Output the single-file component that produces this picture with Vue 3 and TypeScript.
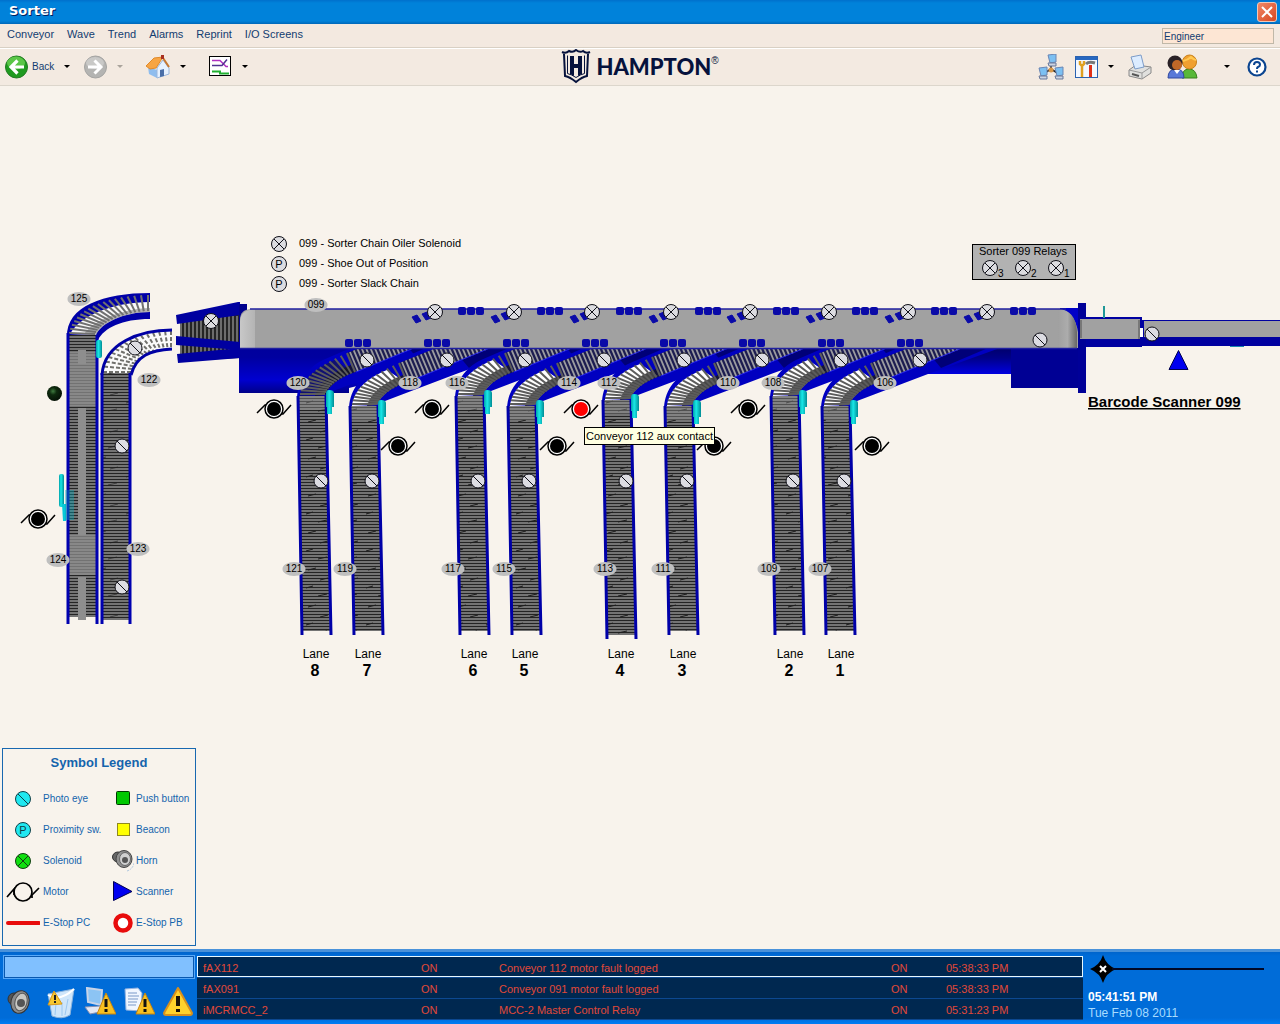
<script setup lang="ts">
import { ref } from 'vue'

type Pt = [number, number]
type Segment = { x1: number; y1: number; x2: number; y2: number }
type Mark = { x: number; y: number }

const operator = ref('Engineer')
const command = ref('')

const menus = ['Conveyor', 'Wave', 'Trend', 'Alarms', 'Reprint', 'I/O Screens']

const bezier = (p: Pt[], t: number): Pt => {
  const u = 1 - t
  const k = [u * u * u, 3 * u * u * t, 3 * u * t * t, t * t * t]
  return [0, 1].map((i) => k.reduce((s, c, n) => s + c * p[n][i], 0)) as Pt
}

const between = (a: Pt, b: Pt, t: number): Pt => [a[0] + (b[0] - a[0]) * t, a[1] + (b[1] - a[1]) * t]

const seg = (a: Pt, b: Pt): Segment => ({ x1: a[0], y1: a[1], x2: b[0], y2: b[1] })

const fan = (outer: Pt[], inner: Pt[], n: number): Segment[] =>
  Array.from({ length: n }, (_, i) => seg(bezier(outer, i / (n - 1)), bezier(inner, i / (n - 1))))

/* Rollers of a spur, relative to the top left corner of its lane */
const outerCurve: Pt[] = [[3, -2], [5, -18], [22, -31], [50, -43]]
const innerCurve: Pt[] = [[28, -2], [32, -11], [42, -18], [58, -24]]
const spurCurve = fan(outerCurve, innerCurve, 14)
const spurStraight = Array.from({ length: 27 }, (_, i) =>
  seg(between([53, -44], [151, -84], i / 26), between([61, -25], [159, -65], i / 26)),
)

const lanes = [
  { no: 8, x: 297, top: 396, end: 635, tx: 315 },
  { no: 7, x: 349, top: 406, end: 635, tx: 367 },
  { no: 6, x: 455, top: 396, end: 635, tx: 473 },
  { no: 5, x: 507, top: 406, end: 635, tx: 524 },
  { no: 4, x: 602, top: 400, end: 639, tx: 620 },
  { no: 3, x: 664, top: 406, end: 635, tx: 682 },
  { no: 2, x: 770, top: 396, end: 635, tx: 789 },
  { no: 1, x: 821, top: 406, end: 635, tx: 840 },
]

const upperFan = fan(
  [[69, 333], [74, 308], [108, 296], [148, 295]],
  [[95, 334], [100, 322], [124, 312], [148, 311]],
  18,
)
const lowerFan = fan(
  [[103, 372], [106, 344], [142, 332], [171, 331]],
  [[131, 372], [136, 356], [154, 351], [171, 348]],
  16,
)

const funnelRollers = Array.from({ length: 15 }, (_, i) => 181 + i * 4)

const shoesTop = [458, 537, 616, 695, 773, 852, 931, 1010]
const shoesBottom = [345, 424, 503, 582, 660, 739, 818, 897]
const shoesTilted = [412, 491, 570, 649, 727, 806, 885, 964]

const solenoids: Mark[] = [
  ...[435, 514, 592, 671, 750, 829, 908, 987].map((x) => ({ x, y: 312 })),
  { x: 211, y: 321 },
  { x: 279, y: 244 },
  { x: 990, y: 268 },
  { x: 1023, y: 268 },
  { x: 1056, y: 268 },
]

const photoEyes: Mark[] = [
  ...[367, 447, 525, 604, 684, 762, 841, 920].map((x) => ({ x, y: 360 })),
  ...[321, 372, 478, 529, 626, 687, 793, 844].map((x) => ({ x, y: 481 })),
  { x: 122, y: 446 },
  { x: 122, y: 587 },
  { x: 135, y: 348 },
  { x: 1040, y: 340 },
  { x: 1152, y: 334 },
]

const motors = [
  { x: 274, y: 409, fault: false },
  { x: 432, y: 409, fault: false },
  { x: 581, y: 409, fault: true },
  { x: 748, y: 409, fault: false },
  { x: 398, y: 446, fault: false },
  { x: 557, y: 446, fault: false },
  { x: 714, y: 446, fault: false },
  { x: 872, y: 446, fault: false },
  { x: 38, y: 519, fault: false },
]

const tags = [
  { id: '125', x: 79, y: 299 }, { id: '122', x: 149, y: 380 }, { id: '124', x: 58, y: 560 },
  { id: '123', x: 138, y: 549 }, { id: '099', x: 316, y: 305 }, { id: '120', x: 298, y: 383 },
  { id: '118', x: 410, y: 383 }, { id: '116', x: 457, y: 383 }, { id: '114', x: 569, y: 383 },
  { id: '112', x: 609, y: 383 }, { id: '110', x: 728, y: 383 }, { id: '108', x: 773, y: 383 },
  { id: '106', x: 885, y: 383 }, { id: '121', x: 294, y: 569 }, { id: '119', x: 345, y: 569 },
  { id: '117', x: 453, y: 569 }, { id: '115', x: 504, y: 569 }, { id: '113', x: 605, y: 569 },
  { id: '111', x: 663, y: 569 }, { id: '109', x: 769, y: 569 }, { id: '107', x: 820, y: 569 },
]

const alarms = [
  { tag: 'fAX112', state: 'ON', text: 'Conveyor 112 motor fault logged', ack: 'ON', time: '05:38:33 PM' },
  { tag: 'fAX091', state: 'ON', text: 'Conveyor 091 motor fault logged', ack: 'ON', time: '05:38:33 PM' },
  { tag: 'iMCRMCC_2', state: 'ON', text: 'MCC-2 Master Control Relay', ack: 'ON', time: '05:31:23 PM' },
]
</script>

<template>
  <div class="screen">
    <header class="titlebar">
      <h1>Sorter</h1>
      <button class="close" type="button" aria-label="Close">
        <svg width="12" height="12" viewBox="0 0 12 12"><path d="M1 1 11 11M11 1 1 11" stroke="#fff" stroke-width="2" /></svg>
      </button>
    </header>

    <nav class="menubar">
      <a v-for="m in menus" :key="m" href="#">{{ m }}</a>
      <input v-model="operator" class="operator" type="text" aria-label="Operator" />
    </nav>

    <div class="toolbar">
      <div class="tools">
        <div class="split nav">
          <button type="button" class="tool">
            <svg width="23" height="24" viewBox="0 0 23 24">
              <circle cx="11.5" cy="12" r="11" fill="#1f9a1f" stroke="#237a23" />
              <ellipse cx="11" cy="8" rx="9" ry="6.5" fill="#6fd455" opacity=".75" />
              <path d="M12.5 5.500 6 12l6.500 6.500M6.500 12H19" fill="none" stroke="#fff" stroke-width="3.200" />
            </svg>
            <span>Back</span>
          </button>
          <button type="button" class="drop" aria-label="Back history"><i /></button>
        </div>
        <div class="split nav">
          <button type="button" class="tool" aria-label="Forward">
            <svg width="23" height="24" viewBox="0 0 23 24">
              <circle cx="11.5" cy="12" r="11" fill="#b4b4b2" stroke="#a4a4a2" />
              <ellipse cx="11" cy="8" rx="9" ry="6" fill="#d2d2d0" opacity=".7" />
              <path d="M10.5 5.500 17 12l-6.500 6.500M16.500 12H4" fill="none" stroke="#fff" stroke-width="3" />
            </svg>
          </button>
          <button type="button" class="drop faint" aria-label="Forward history"><i /></button>
        </div>
        <div class="split">
          <button type="button" class="tool" aria-label="Home">
            <svg width="24" height="24" viewBox="0 0 24 24">
              <path d="M2 12 11 15V23L3 19Z" fill="#8fbdee" />
              <path d="M11 13 17 5l6 8v6l-12 4Z" fill="#e6f1ff" stroke="#9ab6dc" />
              <path d="M0 11 8 3 17 2 10 13 4 14Z" fill="#f7a544" stroke="#e08a2a" />
              <path d="M17 3 23 12" stroke="#c87830" stroke-width="2" />
              <path d="M14 15l4-1v7l-4 1Z" fill="#4a6fa8" />
              <path d="M15 0h3v4h-3z" fill="#a83020" />
            </svg>
          </button>
          <button type="button" class="drop" aria-label="Home menu"><i /></button>
        </div>
        <div class="split">
          <button type="button" class="tool" aria-label="Trend">
            <svg width="23" height="21" viewBox="0 0 23 21">
              <rect x=".5" y=".5" width="21" height="19" fill="#fff" stroke="#000" />
              <path d="M3 4.500h8l6 6h2" fill="none" stroke="#b030c0" stroke-width="1.500" />
              <path d="M3 9.500h10l5-6" fill="none" stroke="#503090" stroke-width="1.500" />
              <path d="M3 15.500h8v2h9" fill="none" stroke="#20b030" stroke-width="2" />
            </svg>
          </button>
          <button type="button" class="drop" aria-label="Trend menu"><i /></button>
        </div>
      </div>

      <div class="brand">
        <svg width="31" height="35" viewBox="0 0 31 35" aria-hidden="true">
          <path d="M1 3q4 2 7-1 4 2 7-1 4 3 7 1 3 3 7 1M3 5l1 22q5 1 11 6 6-5 11-6l1-22" fill="none" stroke="#06123c" stroke-width="2" />
          <path d="M6.500 6.500v18q4 1 8.500 4 4.500-3 8.500-4v-18" fill="none" stroke="#06123c" />
          <path d="M9 7h4v8h4V7h4v18l-4 2v-8h-4v8l-4-2Z" fill="#06123c" />
        </svg>
        <span class="name">HAMPTON</span><sup>®</sup>
      </div>

      <div class="tools right">
        <button type="button" class="tool" aria-label="Network">
          <svg width="26" height="26" viewBox="0 0 26 26">
            <path d="M13 8v8M5 20 13 15l8 5" stroke="#222" stroke-width="1.500" fill="none" />
            <circle cx="13" cy="16" r="2.500" fill="#d89848" />
            <g v-for="p in [[9, 0], [0, 13], [16, 13]]" :key="p[0]" :transform="`translate(${p[0]} ${p[1]})`">
              <path d="M1 1 9 0v8l-6 1Z" fill="#7cc0f2" stroke="#6a86b4" />
              <path d="M1 9h8v3H2Z" fill="#ccd4e2" stroke="#69789a" />
            </g>
          </svg>
        </button>
        <div class="split">
          <button type="button" class="tool" aria-label="Settings">
            <svg width="23" height="22" viewBox="0 0 23 22">
              <rect x=".5" y=".5" width="22" height="21" fill="#f4f8ff" stroke="#2a62b0" />
              <path d="M1 1h21v3H1z" fill="#2768c0" />
              <path d="M5 5v3l2 2 2-2V5M7 10v11" stroke="#e0a020" stroke-width="2.500" fill="none" />
              <path d="M11 8q3-3 9-1" stroke="#777" stroke-width="3" fill="none" />
              <path d="M15.500 9v12" stroke="#e03018" stroke-width="3" />
            </svg>
          </button>
          <button type="button" class="drop" aria-label="Settings menu"><i /></button>
        </div>
        <button type="button" class="tool print" aria-label="Print">
          <svg width="24" height="26" viewBox="0 0 24 26">
            <path d="M1 16 8 11l15 2v6l-9 6-13-3Z" fill="#e0e0de" stroke="#888" />
            <path d="M3 3 13 1l3 12-9 2Z" fill="#dcecff" stroke="#7c9cc8" />
            <path d="M1 16l13 3 9-6M14 19v5" stroke="#999" fill="none" />
            <path d="M4 20l7 2" stroke="#555" stroke-width="2" />
          </svg>
        </button>
        <div class="split users">
          <button type="button" class="tool" aria-label="Users">
            <svg width="31" height="26" viewBox="0 0 31 26">
              <path d="M15 24q0-9 7-9t8 9Z" fill="#58b838" stroke="#38801c" />
              <circle cx="22.500" cy="8" r="7" fill="#f0a030" stroke="#c88018" />
              <path d="M16 7q5-1 8-4 3 3 5 3" stroke="#ffc850" stroke-width="2" fill="none" />
              <path d="M1 24q0-9 8-9t8 9Z" fill="#5878d8" stroke="#3048a0" />
              <circle cx="8" cy="9" r="7.500" fill="#2a2226" />
              <circle cx="10" cy="11" r="5" fill="#c06828" />
              <path d="M7 16l3 4 3-4Z" fill="#fff" />
            </svg>
          </button>
          <button type="button" class="drop" aria-label="Users menu"><i /></button>
        </div>
        <button type="button" class="tool help" aria-label="Help">
          <svg width="20" height="20" viewBox="0 0 20 20">
            <circle cx="10" cy="10" r="8.500" fill="#fff" stroke="#0b4590" stroke-width="2.200" />
            <path d="M7 8q0-3 3-3t3 2.700q0 1.500-2 2.300-1 .5-1 2" fill="none" stroke="#0b4590" stroke-width="2" />
            <path d="M9 13.500h2v2H9z" fill="#0b4590" />
          </svg>
        </button>
      </div>
    </div>

    <main class="stage">
      <svg class="plant" viewBox="0 86 1280 600" role="img" aria-label="Sorter conveyor layout">
        <defs>
          <pattern id="rows" width="8" height="3" patternUnits="userSpaceOnUse">
            <rect width="8" height="3" fill="#747474" />
            <rect y="2" width="8" height="1" fill="#242424" />
          </pattern>
          <pattern id="rowsLight" width="8" height="3" patternUnits="userSpaceOnUse">
            <rect width="8" height="3" fill="#888" />
            <rect y="2" width="8" height="1" fill="#727272" />
          </pattern>
          <pattern id="wear" width="30" height="37" patternUnits="userSpaceOnUse">
            <path d="M18 4l9-2M8 15l8-2M20 25l8-2M6 33l7-2" stroke="#1c1c1c" />
          </pattern>
          <linearGradient id="base" x1="0" y1="0" x2="0" y2="1">
            <stop offset="0" stop-color="#00008c" />
            <stop offset=".6" stop-color="#0000a0" />
            <stop offset=".85" stop-color="#0000d0" />
            <stop offset="1" stop-color="#000088" />
          </linearGradient>
          <linearGradient id="apron" x1="0" y1="0" x2="0" y2="1">
            <stop offset="0" stop-color="#000068" />
            <stop offset=".4" stop-color="#000088" />
            <stop offset="1" stop-color="#0000e0" />
          </linearGradient>
          <linearGradient id="drum" x1="0" y1="0" x2="1" y2="0">
            <stop offset="0" stop-color="#c8c8c8" />
            <stop offset="1" stop-color="#b4b4b4" />
          </linearGradient>
          <linearGradient id="drumEnd" x1="0" y1="0" x2="1" y2="0">
            <stop offset="0" stop-color="#a0a0a0" />
            <stop offset=".5" stop-color="#acacac" />
            <stop offset="1" stop-color="#666" />
          </linearGradient>
          <radialGradient id="ball" cx=".4" cy=".35" r=".7">
            <stop offset="0" stop-color="#3f7a3f" />
            <stop offset=".35" stop-color="#0e2a0e" />
            <stop offset="1" stop-color="#050f05" />
          </radialGradient>
          <linearGradient id="cyan" x1="0" y1="0" x2="1" y2="0">
            <stop offset="0" stop-color="#00a0a8" />
            <stop offset=".4" stop-color="#18e8e8" />
            <stop offset="1" stop-color="#008c94" />
          </linearGradient>
          <clipPath id="belowBelt"><rect x="230" y="349" width="800" height="300" /></clipPath>
          <g id="eye">
            <circle r="7" fill="#dcdce2" stroke="#101018" />
            <path d="M-5-5 5 5" stroke="#101018" />
          </g>
          <g id="solenoid">
            <circle r="7.500" fill="#dcdce0" stroke="#101018" />
            <path d="M-5-5 5 5M5-5-5 5" stroke="#101018" />
          </g>
          <g id="shoes">
            <rect v-for="i in 3" :key="i" :x="(i - 1) * 9" y="0" width="8" height="8" rx="2" fill="#0a0aa8" />
          </g>
        </defs>

        <!-- take-away lines 124 / 125 -->
        <path d="M67 337C66 306 104 293 150 293V319C122 319 104 328 98 340Z" fill="#0000a8" />
        <path d="M70 334C80 316 112 302 150 302V312C124 312 101 323 96 335Z" fill="#fafafa" />
        <path d="M84 334C94 320 122 309 150 308V312C124 312 101 323 96 335Z" fill="#444" opacity=".4" />
        <line v-for="(r, i) in upperFan" :key="'u' + i" v-bind="r" stroke="#707070" stroke-width="2" />
        <rect x="68" y="335" width="29" height="282" fill="url(#rows)" />
        <path d="M69 352h27v54H69zM69 535h27v40H69z" fill="url(#rowsLight)" />
        <path d="M78 350h8v14h-8zM78 408h8v127h-8zM78 577h8v43h-8z" fill="#8e8e8e" />
        <path d="M68 333V624M97 335V624" stroke="#0000b0" stroke-width="3" />
        <rect x="96" y="340" width="6" height="18" rx="2" fill="url(#cyan)" />
        <rect x="59" y="474" width="5" height="33" rx="2" fill="url(#cyan)" />
        <path d="M62 504h4v17h-3z" fill="#08c8d8" />
        <path d="M65 490h9v30h-9z" fill="#00a8b8" opacity=".4" />

        <!-- take-away lines 122 / 123 -->
        <path d="M101 374C104 342 140 330 172 330V349C150 350 136 358 131 374Z" fill="#fafafa" />
        <line v-for="(r, i) in lowerFan" :key="'l' + i" v-bind="r" stroke="#70706c" stroke-width="2" stroke-dasharray="4 2" />
        <path d="M102 375C104 343 140 330 172 330M131 375C136 356 150 350 172 349" fill="none" stroke="#0000a4" stroke-width="3" />
        <rect x="102" y="373" width="28" height="247" fill="url(#rows)" />
        <rect x="102" y="373" width="28" height="247" fill="url(#wear)" opacity=".6" />
        <path d="M102 373V624M130 373V624" stroke="#0000b0" stroke-width="3" />

        <!-- infeed funnel -->
        <path d="M180 317 240 304V358L180 361Z" fill="#242424" />
        <path v-for="x in funnelRollers" :key="x" :d="`M${x} 316V358`" stroke="#858585" stroke-width="1.500" />
        <path d="M176 315 238 302H240V315L177 324ZM176 336 240 342V350L176 345ZM177 354 240 348V358L178 363Z" fill="#0000a0" />

        <!-- sorter frame -->
        <path d="M239 304h8v44h118v36L349 388v5H239Z" fill="url(#base)" />
        <path d="M900 347h112v27H900z" fill="url(#apron)" />
        <path d="M1011 346h69v42h-69z" fill="#000094" />

        <!-- discharge spurs and lanes -->
        <g clip-path="url(#belowBelt)">
          <g v-for="l in lanes" :key="'s' + l.no" :transform="`translate(${l.x} ${l.top})`">
            <path d="M0 4C0-14 10-28 26-36L86-62H190L107-32 36-5 29 2Z" fill="#0000c0" />
            <path d="M110-50 170-72H200L120-38Z" fill="#000078" />
            <path d="M3 0C5-16 18-28 38-36L56-24C42-18 32-11 28-1Z" :fill="l.no === 8 ? '#101070' : '#fff'" />
            <path d="M18 0C22-14 34-23 54-31L58-24C42-18 32-11 28-1Z" fill="#181818" opacity=".8" />
            <path d="M50-43 152-84 160-66 58-24Z" fill="#1c1c50" />
            <line v-for="(r, i) in spurCurve" :key="'c' + i" v-bind="r" stroke="#5c5c5c" stroke-width="2" />
            <line v-for="(r, i) in spurStraight" :key="'d' + i" v-bind="r" stroke="#9c9ca0" stroke-width="1.800" />
            <path d="M59-24 160-66" stroke="#2828e8" />
          </g>
        </g>
        <g v-for="l in lanes" :key="'b' + l.no">
          <path :d="`M${l.x + 1} ${l.top}h28L${l.x + 33} ${l.end - 4}h-28Z`" fill="url(#rows)" />
          <path :d="`M${l.x + 1} ${l.top}h28L${l.x + 33} ${l.end - 4}h-28Z`" fill="url(#wear)" />
          <path :d="`M${l.x + 2} ${l.top}h27v14h-27Z`" fill="#999" opacity=".4" />
          <path :d="`M${l.x + 1} ${l.top}L${l.x + 5} ${l.end}M${l.x + 29} ${l.top}L${l.x + 34} ${l.end}`" stroke="#0000a8" stroke-width="3" />
          <path :d="`M${l.x + 32} ${l.top - 6}q5 0 5 3v14h-2v7h-5v-7h-1v-14q0-3 3-3Z`" fill="url(#cyan)" />
        </g>

        <!-- sorter belt -->
        <path d="M240 348V320Q240 309 252 309H1064Q1077 309 1078 330V348Z" fill="#a1a1a1" />
        <path d="M1060 308H1079V340Q1077 312 1060 309Z" fill="#0000c8" />
        <path d="M240 348V322Q240 310 255 309V348Z" fill="url(#drum)" />
        <path d="M1058 309Q1076 310 1077 332V348H1058Z" fill="url(#drumEnd)" />
        <path d="M250 309H1066M240 348.500H1077" stroke="#2020a0" stroke-width="1.500" />
        <use v-for="x in shoesTop" :key="'t' + x" href="#shoes" :x="x" y="307" />
        <use v-for="x in shoesBottom" :key="'o' + x" href="#shoes" :x="x" y="339" />
        <path v-for="x in shoesTilted" :key="'i' + x" :d="`M${x} 317l5-2 4 6-5 2ZM${x + 10} 314l5-2 4 6-5 2Z`" fill="#0a0aa8" stroke="#0a0aa8" />
        <path d="M1078 303h8v90h-8z" fill="#000098" />

        <!-- infeed belts -->
        <path d="M1086 317h56v3h138v26h-138v1h-56z" fill="#0000a0" />
        <path d="M1080 319h60v20h-60z" fill="#a1a1a1" />
        <path d="M1080 320h2v18h-2zM1138 320h2v19h-2z" fill="#777" />
        <path d="M1144 321h136v16h-136z" fill="#a1a1a1" />
        <path d="M1140 328h3v9h-3z" fill="#fff" />
        <path d="M1103 306h2v12h-2z" fill="#209898" />
        <path d="M1230 346h14v1h-14z" fill="#1888b0" />

        <!-- relay panel -->
        <rect x="972.500" y="244.500" width="103" height="35" fill="#b2b2b2" stroke="#000" />
        <text class="note" x="1023" y="255" text-anchor="middle">Sorter 099 Relays</text>
        <text class="tag" x="998" y="277">3</text>
        <text class="tag" x="1031" y="277">2</text>
        <text class="tag" x="1064" y="277">1</text>

        <!-- device list -->
        <g v-for="y in [264, 284]" :key="y">
          <circle cx="279" :cy="y" r="7.500" fill="#dcdce0" stroke="#101018" />
          <text class="note" x="279" :y="y + 4" text-anchor="middle">P</text>
        </g>
        <text class="note" x="299" y="247">099 - Sorter Chain Oiler Solenoid</text>
        <text class="note" x="299" y="267">099 - Shoe Out of Position</text>
        <text class="note" x="299" y="287">099 - Sorter Slack Chain</text>

        <use v-for="(s, i) in solenoids" :key="'z' + i" href="#solenoid" :x="s.x" :y="s.y" />
        <use v-for="(s, i) in photoEyes" :key="'y' + i" href="#eye" :x="s.x" :y="s.y" />
        <g v-for="t in tags" :key="t.id">
          <ellipse :cx="t.x" :cy="t.y" rx="11.500" ry="7" fill="#bfbfbf" />
          <text class="tag" :x="t.x" :y="t.y + 3" text-anchor="middle">{{ t.id }}</text>
        </g>
        <g v-for="(m, i) in motors" :key="'m' + i" :transform="`translate(${m.x} ${m.y})`">
          <path d="M-17 4-9-4H-6M6 5H9L17-4" fill="none" stroke="#000" stroke-width="1.500" />
          <circle r="9" fill="#fff" stroke="#000" stroke-width="1.500" />
          <circle r="7" :fill="m.fault ? '#f00' : '#000'" />
        </g>
        <circle cx="54.500" cy="393.500" r="7.500" fill="url(#ball)" />

        <path d="M1178.500 350.500 1188 369.500H1169Z" fill="#0000f0" stroke="#000050" />
        <a href="#"><text class="scanner" x="1088" y="407">Barcode Scanner 099</text></a>

        <g v-for="l in lanes" :key="'n' + l.no">
          <text class="lane" :x="l.tx + 1" y="658" text-anchor="middle">Lane</text>
          <text class="laneNo" :x="l.tx" y="676" text-anchor="middle">{{ l.no }}</text>
        </g>

        <rect x="584.500" y="427.500" width="130" height="17" fill="#ffffe1" stroke="#000" />
        <text class="note" x="586" y="440">Conveyor 112 aux contact</text>
      </svg>

      <section class="legend">
        <h2>Symbol Legend</h2>
        <ul>
          <li><svg width="34" height="22" viewBox="-17 -11 34 22"><circle r="7.500" fill="#20e8f0" stroke="#104048" /><path d="M-5-5 5 5" stroke="#104048" /></svg>Photo eye</li>
          <li><svg width="23" height="22" viewBox="-12 -11 23 22"><rect x="-6.500" y="-7.500" width="13" height="13" rx="1" fill="#00c800" stroke="#003800" /></svg>Push button</li>
          <li><svg width="34" height="22" viewBox="-17 -11 34 22"><circle r="7.500" fill="#20e8f0" stroke="#104048" /><text y="4" text-anchor="middle" class="proxP">P</text></svg>Proximity sw.</li>
          <li><svg width="23" height="22" viewBox="-12 -11 23 22"><rect x="-5.500" y="-6.500" width="12" height="12" fill="#ff0" stroke="#908820" /></svg>Beacon</li>
          <li><svg width="34" height="22" viewBox="-17 -11 34 22"><circle r="7.500" fill="#10e010" stroke="#104010" /><path d="M-5-5 5 5M5-5-5 5" stroke="#104010" /></svg>Solenoid</li>
          <li>
            <svg width="23" height="22" viewBox="-12 -11 23 22">
              <path d="M4 10q6-2 7-8" fill="none" stroke="#b0c8e0" stroke-dasharray="2 1" />
              <ellipse cx="-5" cy="-4" rx="5.500" ry="5" fill="#666" stroke="#333" />
              <ellipse cx="1" cy="-2" rx="8" ry="8.500" fill="#909090" stroke="#444" />
              <ellipse cx="2" cy="-2" rx="5.500" ry="6.500" fill="#d0d0d0" stroke="#666" />
              <circle cx="2" cy="-1" r="3" fill="#555" />
            </svg>Horn
          </li>
          <li><svg width="34" height="22" viewBox="-17 -11 34 22"><circle r="9" fill="none" stroke="#000" stroke-width="1.700" /><path d="M-16 5-9-3V3M9 6V3L16-4" stroke="#000" stroke-width="1.700" fill="none" /></svg>Motor</li>
          <li><svg width="23" height="22" viewBox="-12 -11 23 22"><path d="M-9.500-10.500 9-.500-9.500 8.500Z" fill="#0000f0" stroke="#000050" /></svg>Scanner</li>
          <li><svg width="34" height="22" viewBox="-17 -11 34 22"><path d="M-15 0H16" stroke="#e80c0c" stroke-width="4" stroke-linecap="round" /></svg>E-Stop PC</li>
          <li><svg width="23" height="22" viewBox="-12 -11 23 22"><circle cx="0" r="7.500" fill="#fff" stroke="#e80c0c" stroke-width="4.500" /></svg>E-Stop PB</li>
        </ul>
      </section>
    </main>

    <footer class="status">
      <div class="panel">
        <input v-model="command" type="text" aria-label="Command" />
        <div class="actions">
          <button type="button" aria-label="Silence horn">
            <svg width="32" height="32" viewBox="0 0 32 32">
              <ellipse cx="10" cy="12" rx="6" ry="6" fill="#555" stroke="#333" />
              <ellipse cx="16" cy="15" rx="9" ry="11.500" fill="#8c8c8c" stroke="#333" transform="rotate(15 16 15)" />
              <ellipse cx="17" cy="15" rx="6" ry="9" fill="#c8c8c4" stroke="#555" transform="rotate(15 17 15)" />
              <circle cx="17" cy="16" r="4" fill="#555" />
            </svg>
          </button>
          <button type="button" aria-label="Clear alarms">
            <svg width="32" height="32" viewBox="0 0 32 32">
              <path d="M4 7 30 2 26 28Q18 33 8 29Z" fill="#cfe6fa" stroke="#8db4dc" />
              <path d="M4 8Q16 15 30 2" fill="none" stroke="#fff" stroke-width="2" />
              <path d="M12 16l-1 12M18 15v14M24 12l-3 16" stroke="#9cc8f0" />
              <path d="M4 18 10 4 18 17Z" fill="#f8c830" stroke="#d89818" />
              <path d="M11 8v5M11 14v2" stroke="#222" stroke-width="2" />
            </svg>
          </button>
          <button type="button" aria-label="System alarms">
            <svg width="32" height="32" viewBox="0 0 32 32">
              <path d="M3 1 18 3 17 18 4 15Z" fill="#8cc4f4" stroke="#c8d4e8" stroke-width="2" />
              <path d="M1 20 16 19 21 24 6 27Z" fill="#e4e8f4" stroke="#8890b0" />
              <path d="M22 6 32 27H13Z" fill="#f8c020" stroke="#c88410" stroke-linejoin="round" />
              <path d="M22 12v8M22 22v3" stroke="#111" stroke-width="3" />
            </svg>
          </button>
          <button type="button" aria-label="Alarm report">
            <svg width="32" height="32" viewBox="0 0 32 32">
              <path d="M2 2 15 1l4 5-1 18-15-1Z" fill="#f0f6ff" stroke="#8fb0e0" />
              <path d="M5 6h9M5 9h11M5 12h10M5 15h9M5 18h8" stroke="#7898c8" />
              <path d="M22 6 32 27H13Z" fill="#f8c020" stroke="#c88410" stroke-linejoin="round" />
              <path d="M22 12v8M22 22v3" stroke="#111" stroke-width="3" />
            </svg>
          </button>
          <button type="button" aria-label="Active alarms">
            <svg width="32" height="32" viewBox="0 0 32 32">
              <path d="M15 1 29 26q0 2-2 2H3q-2 0-2-2Z" fill="#ffd22c" stroke="#d8901c" stroke-width="2" stroke-linejoin="round" />
              <path d="M15 9v10M15 22v3" stroke="#1a1208" stroke-width="4" />
            </svg>
          </button>
        </div>
      </div>

      <table class="alarms">
        <colgroup><col class="cTag" /><col class="cState" /><col /><col class="cAck" /><col class="cTime" /></colgroup>
        <tbody>
          <tr v-for="(a, i) in alarms" :key="a.tag" :class="{ selected: i === 0 }">
            <td>{{ a.tag }}</td><td>{{ a.state }}</td><td>{{ a.text }}</td><td>{{ a.ack }}</td><td>{{ a.time }}</td>
          </tr>
        </tbody>
      </table>

      <div class="clock">
        <div class="track">
          <svg width="26" height="28" viewBox="-13 -14 26 28">
            <path d="M0-14Q3-4 13 0 3 4 0 14-3 4-13 0-3-4 0-14Z" fill="#000" />
            <path d="M-3-3 3 3M3-3-3 3" stroke="#fff" stroke-width="2" />
          </svg>
          <span class="rail" />
        </div>
        <strong>05:41:51 PM</strong>
        <span>Tue Feb 08 2011</span>
      </div>
    </footer>
  </div>
</template>

<style>
body {
  margin: 0;
  background: #f8f3ec;
}
</style>

<style scoped>
* {
  box-sizing: border-box;
}
.screen {
  display: flex;
  flex-direction: column;
  min-height: 100vh;
  background: #f8f3ec;
  font-family: "Liberation Sans", Arial, sans-serif;
  font-size: 11px;
  color: #000;
}
button {
  display: flex;
  align-items: center;
  margin: 0;
  padding: 0;
  border: 0;
  background: none;
  font: inherit;
  color: inherit;
}
svg {
  display: block;
  flex: none;
}

.titlebar {
  display: flex;
  align-items: center;
  justify-content: space-between;
  height: 24px;
  padding: 0 3px 0 9px;
  background: linear-gradient(#0070cc, #0082da 3px, #0082da 21px, #0068b8);
}
.titlebar h1 {
  margin: 0 0 2px;
  font: bold 13px/20px "DejaVu Sans", Verdana, sans-serif;
  color: #fff;
  text-shadow: 1px 1px 0 #002060;
}
.close {
  justify-content: center;
  width: 20px;
  height: 20px;
  border: 1px solid #f0c8b8;
  border-radius: 3px;
  background: linear-gradient(135deg, #f08868, #d84820);
}

.menubar {
  display: flex;
  align-items: center;
  gap: 13px;
  height: 24px;
  padding: 0 6px 0 7px;
  border-bottom: 1px solid #d8d0c4;
  background: #f3e9e0;
}
.menubar a {
  margin-bottom: 3px;
  color: #123c70;
  text-decoration: none;
}
.operator {
  width: 112px;
  height: 16px;
  margin-left: auto;
  margin-top: 1px;
  padding: 0 1px;
  border: 1px solid #c0b8a8;
  background: #fde6d4;
  font: 10px "Liberation Sans", Arial, sans-serif;
  color: #123c70;
}

.toolbar {
  display: grid;
  grid-template-columns: 1fr auto 1fr;
  align-items: center;
  height: 38px;
  padding: 0 13px 2px 5px;
  border-top: 1px solid #fff;
  border-bottom: 1px solid #dcd6cc;
  background: #f3eae1;
}
.tools {
  display: flex;
  align-items: center;
  gap: 20px;
}
.tools.right {
  justify-content: flex-end;
  gap: 11px;
}
.split {
  display: flex;
  align-items: center;
  gap: 7px;
}
.split.nav:first-child {
  margin-right: -9px;
}
.tool {
  gap: 4px;
  font-size: 10px;
  color: #123c70;
}
.drop {
  justify-content: center;
  width: 12px;
  height: 20px;
}
.drop i {
  border: 3px solid transparent;
  border-top-color: #000;
  border-bottom: 0;
}
.drop.faint i {
  border-top-color: #aaa49c;
}
.users {
  gap: 23px;
  margin-left: 4px;
}
.help {
  margin-left: 3px;
}
.brand {
  display: flex;
  align-items: center;
  margin-left: 8px;
  color: #06123c;
}
.brand .name {
  margin-left: 4px;
  font: 900 22px/32px Lato, sans-serif;
}
.brand sup {
  align-self: flex-start;
  margin-top: 6px;
  font-size: 10px;
  line-height: 12px;
}

.stage {
  display: flex;
  flex: 1;
  flex-direction: column;
  align-items: flex-start;
}
.plant {
  width: 100%;
  height: auto;
}
.note {
  font-size: 11px;
}
.tag {
  font-size: 10px;
}
.lane {
  font-size: 12px;
}
.laneNo {
  font-size: 16px;
  font-weight: bold;
}
.scanner {
  font-size: 15px;
  font-weight: bold;
  text-decoration: underline;
}

.legend {
  width: 194px;
  margin: auto 0 3px 2px;
  padding-bottom: 7px;
  border: 1px solid #1868b0;
  color: #1464ac;
}
.legend h2 {
  margin: 6px 0 12px;
  font-size: 13px;
  line-height: 16px;
  text-align: center;
}
.legend ul {
  display: grid;
  grid-template-columns: 105px 1fr;
  grid-auto-rows: 31px;
  margin: 0;
  padding: 0 0 0 3px;
  list-style: none;
}
.legend li {
  display: flex;
  align-items: center;
  gap: 3px;
  font-size: 10px;
  white-space: nowrap;
}
.legend li:nth-child(even) {
  gap: 2px;
}
.proxP {
  font-size: 11px;
  fill: #104048;
}

.status {
  display: flex;
  align-items: flex-start;
  height: 75px;
  border-top: 3px solid #4a92da;
  background: linear-gradient(#0064cc, #006cd8 4px, #006cd8 66px, #007cf4);
}
.panel {
  width: 197px;
  padding: 3px 2px 0 3px;
}
.panel input {
  display: block;
  width: 100%;
  height: 24px;
  border: 1px solid #58a8f8;
  outline: 1px solid #0858b0;
  outline-offset: -2px;
  background: #80c0ff;
}
.actions {
  display: flex;
  justify-content: space-between;
  margin: 8px 0 0 1px;
}
.alarms {
  flex: 1;
  margin-top: 4px;
  border-collapse: collapse;
  table-layout: fixed;
  background: #002850;
  color: #e04838;
}
.cTag {
  width: 218px;
}
.cState {
  width: 78px;
}
.cAck {
  width: 55px;
}
.cTime {
  width: 143px;
}
.alarms td {
  height: 21px;
  padding: 3px 0 0 6px;
  border-bottom: 1px solid #0c4890;
}
.alarms .selected {
  outline: 1px solid #e8f8ff;
  outline-offset: -1px;
}
.clock {
  display: flex;
  flex-direction: column;
  width: 197px;
  padding: 3px 16px 0 5px;
  font-size: 12px;
  line-height: 16px;
  color: #a8dcff;
}
.clock strong {
  margin-top: 6px;
  color: #fff;
}
.track {
  display: flex;
  align-items: center;
}
.track svg {
  margin-left: 2px;
}
.rail {
  flex: 1;
  height: 2px;
  margin-left: -4px;
  background: #000828;
}
</style>
